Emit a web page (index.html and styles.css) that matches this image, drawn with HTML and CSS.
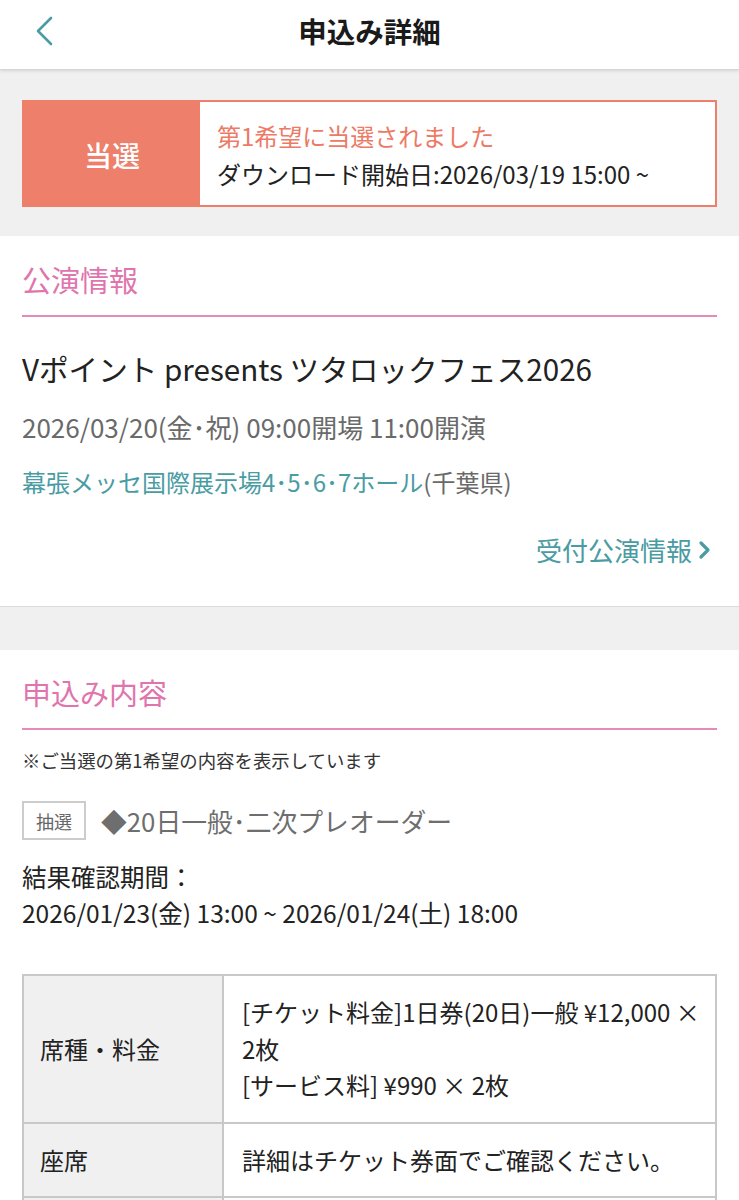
FILE: index.html
```html
<!DOCTYPE html>
<html lang="ja">
<head>
<meta charset="utf-8">
<title>申込み詳細</title>
<link rel="stylesheet" href="styles.css">
</head>
<body>
<header class="topbar">
  <div class="topbar-left">
    <a class="back" href="#" aria-label="戻る">
      <svg width="20" height="30" viewBox="0 0 20 30"><path d="M16 2 L3 15 L16 28" fill="none" stroke="#4a9ca3" stroke-width="2.6" stroke-linecap="round" stroke-linejoin="round"/></svg>
    </a>
  </div>
  <h1 class="topbar-title">申込み詳細</h1>
  <div class="topbar-right"></div>
</header>

<div class="status-wrap">
  <div class="status">
    <div class="status-badge">当選</div>
    <div class="status-msg">
      <p class="status-main">第1希望に当選されました</p>
      <p class="status-sub">ダウンロード開始日:2026/03/19 15:00 ~</p>
    </div>
  </div>
</div>

<section class="card">
  <h2 class="card-title">公演情報</h2>
  <p class="event-name">Vポイント presents ツタロックフェス2026</p>
  <p class="event-date">2026/03/20(金･祝) 09:00開場 11:00開演</p>
  <p class="event-venue"><a href="#" class="venue-link">幕張メッセ国際展示場4･5･6･7ホール</a><span class="pref">(千葉県)</span></p>
  <div class="more-row">
    <a href="#" class="more-link">受付公演情報
      <svg class="more-icon" width="14" height="20" viewBox="0 0 14 20"><path d="M3 3 L10 10 L3 17" fill="none" stroke="#4a9ca3" stroke-width="3.2" stroke-linecap="round" stroke-linejoin="round"/></svg>
    </a>
  </div>
</section>

<section class="card card-second">
  <h2 class="card-title">申込み内容</h2>
  <p class="note">※ご当選の第1希望の内容を表示しています</p>
  <div class="sale-row">
    <span class="tag">抽選</span>
    <span class="sale-name">◆20日一般･二次プレオーダー</span>
  </div>
  <p class="period-label">結果確認期間：</p>
  <p class="period">2026/01/23(金) 13:00 ~ 2026/01/24(土) 18:00</p>

  <table class="detail">
    <tr>
      <th>席種・料金</th>
      <td>[チケット料金]1日券(20日)一般 ¥12,000 × 2枚<br>[サービス料] ¥990 × 2枚</td>
    </tr>
    <tr>
      <th>座席</th>
      <td>詳細はチケット券面でご確認ください。</td>
    </tr>
    <tr class="row-empty">
      <th></th>
      <td></td>
    </tr>
  </table>
</section>
</body>
</html>
```
FILE: styles.css
```css
* { box-sizing: border-box; }

body {
  margin: 0;
  background: #f0f0f0;
  font-family: "Noto Sans CJK JP", "Noto Sans", sans-serif;
  color: #222;
}

p { margin: 0; }

a { text-decoration: none; }

.topbar {
  height: 70px;
  background: #fff;
  display: grid;
  grid-template-columns: 1fr auto 1fr;
  align-items: start;
  border-bottom: 1px solid #d6d6d6;
  box-shadow: 0 1px 3px rgba(0, 0, 0, 0.12);
  position: relative;
  z-index: 1;
}

.topbar-left {
  padding: 16px 0 0 35px;
}

.back {
  display: block;
  width: 20px;
  height: 30px;
}

.back svg { display: block; }

.topbar-title {
  margin: 0;
  padding-top: 11px;
  font-size: 28.5px;
  line-height: 40px;
  font-weight: 700;
  color: #1a1a1a;
}

.status-wrap {
  padding: 30px 22px 29px;
}

.status {
  display: flex;
  height: 107px;
  border: 2px solid #ee7f6b;
  background: #fff;
}

.status-badge {
  width: 176px;
  background: #ee7f6b;
  color: #fff;
  font-size: 28px;
  font-weight: 500;
  display: flex;
  align-items: center;
  justify-content: center;
  padding-top: 3px;
}

.status-msg {
  padding: 15px 0 0 17px;
}

.status-main {
  font-size: 24px;
  line-height: 38px;
  color: #ec7a66;
}

.status-sub {
  font-size: 24px;
  line-height: 38px;
  color: #222;
}

.card {
  background: #fff;
  padding: 23px 22px 38px;
  border-bottom: 1px solid #dcdcdc;
}

.card-second {
  margin-top: 43px;
  padding-top: 22px;
  border-bottom: none;
  padding-bottom: 40px;
}

.card-title {
  margin: 0;
  font-size: 29px;
  line-height: 40px;
  font-weight: 400;
  color: #e075ad;
  padding-bottom: 16px;
  border-bottom: 2px solid #e58bbb;
}

.event-name {
  margin-top: 32px;
  font-size: 29.6px;
  line-height: 40px;
  color: #222;
}

.event-date {
  margin-top: 20px;
  font-size: 26px;
  line-height: 36px;
  color: #6a6a6a;
}

.event-venue {
  margin-top: 19px;
  font-size: 24px;
  line-height: 36px;
}

.venue-link { color: #4a9ca3; }

.pref { color: #6a6a6a; }

.more-row {
  margin-top: 32px;
  display: flex;
  justify-content: flex-end;
  padding-right: 5px;
}

.more-link {
  display: inline-flex;
  align-items: center;
  gap: 6px;
  font-size: 26px;
  line-height: 36px;
  color: #4a9ca3;
}

.more-icon { display: block; }

.note {
  margin-top: 17px;
  font-size: 18.4px;
  line-height: 26px;
  color: #333;
}

.sale-row {
  margin-top: 28px;
  display: flex;
  align-items: center;
  gap: 15px;
}

.tag {
  height: 39px;
  padding: 0 12px;
  border: 2px solid #cccccc;
  display: inline-flex;
  align-items: center;
  font-size: 18px;
  color: #666;
}

.sale-name {
  font-size: 25.8px;
  line-height: 36px;
  color: #6e6e6e;
}

.period-label {
  margin-top: 19px;
  font-size: 24.5px;
  line-height: 36px;
  color: #222;
}

.period {
  font-size: 24.5px;
  line-height: 36px;
  color: #222;
}

.detail {
  margin-top: 43px;
  width: 100%;
  border-collapse: collapse;
  border: 2px solid #c8c8c8;
  font-size: 24px;
  line-height: 36.5px;
  color: #222;
}

.detail th,
.detail td {
  border: 2px solid #c8c8c8;
  vertical-align: middle;
  text-align: left;
  font-weight: 400;
}

.detail th {
  width: 200px;
  background: #f0f0f0;
  padding: 18px 16px;
}

.detail td {
  background: #fff;
  padding: 18px 14px 18px 18px;
}

.row-empty th,
.row-empty td {
  height: 74px;
}
```
